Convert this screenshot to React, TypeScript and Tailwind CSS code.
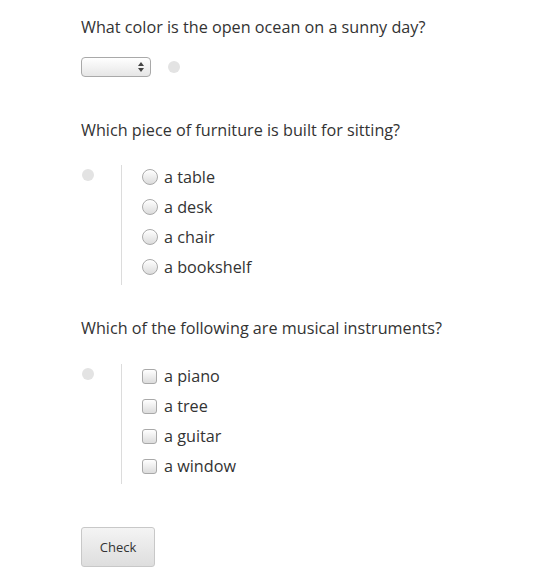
const radios = ['a table', 'a desk', 'a chair', 'a bookshelf'];
const checks = ['a piano', 'a tree', 'a guitar', 'a window'];

function Dot() {
  return <span className="block w-[12px] h-[12px] rounded-full bg-[#e3e3e3]" />;
}

function Radio() {
  return (
    <span className="block w-[16px] h-[16px] mr-[6px] rounded-full border border-[#a9a9a9] bg-gradient-to-b from-white to-[#dcdcdc] shadow-[inset_0_1px_0_#fff]" />
  );
}

function Box() {
  return (
    <span className="block w-[15px] h-[15px] mr-[7px] rounded-[3px] border border-[#a9a9a9] bg-gradient-to-b from-white to-[#dcdcdc]" />
  );
}

function Options({ items, kind }: { items: string[]; kind: 'radio' | 'check' }) {
  return (
    <div className="flex">
      <div className="w-[40px] pl-[1px] pt-[4px]">
        <Dot />
      </div>
      <div className="border-l border-[#dcdcdc] pl-[20px] pb-[6px] flex flex-col gap-[6px]">
        {items.map((t) => (
          <label key={t} className="flex items-center h-[24px]">
            {kind === 'radio' ? <Radio /> : <Box />}
            <span>{t}</span>
          </label>
        ))}
      </div>
    </div>
  );
}

export default function App() {
  return (
    <div className="min-h-[578px] bg-white pl-[81px] pt-[17px] text-[16.2px] leading-[20px] text-[#333] font-['Open_Sans',sans-serif]">
      <p>What color is the open ocean on a sunny day?</p>
      <div className="mt-[20px] flex items-center gap-[17px]">
        <div className="relative w-[70px] h-[20px] rounded-[4px] border border-[#a9a9a9] bg-gradient-to-b from-white to-[#e6e6e6]">
          <svg className="absolute right-[6px] top-[4px]" width="6" height="10" viewBox="0 0 6 10">
            <path d="M3 0 L6 4 H0 Z" fill="#444" />
            <path d="M3 10 L6 6 H0 Z" fill="#444" />
          </svg>
        </div>
        <Dot />
      </div>

      <p className="mt-[43px]">Which piece of furniture is built for sitting?</p>
      <div className="mt-[25px]">
        <Options items={radios} kind="radio" />
      </div>

      <p className="mt-[33px]">Which of the following are musical instruments?</p>
      <div className="mt-[26px]">
        <Options items={checks} kind="check" />
      </div>

      <button className="mt-[43px] w-[74px] h-[40px] rounded-[3px] border border-[#c8c8c8] bg-gradient-to-b from-[#f4f4f4] to-[#dedede] text-[13px] text-[#333]">
        Check
      </button>
    </div>
  );
}
